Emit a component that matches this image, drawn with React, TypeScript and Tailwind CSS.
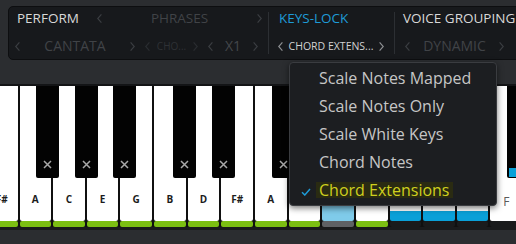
import React from 'react';

type Tone = 'bright' | 'dim' | 'faint' | 'mid';

const chevColor: Record<Tone, string> = {
  bright: 'text-[#b8b8b8]',
  mid: 'text-[#8e9093]',
  dim: 'text-[#3b3e42]',
  faint: 'text-[#2a2d31]',
};

function Chev({ dir, tone }: { dir: 'l' | 'r'; tone: Tone }) {
  return (
    <svg width="5" height="9" viewBox="0 0 5 9" className={`shrink-0 ${chevColor[tone]}`}>
      <path
        d={dir === 'l' ? 'M4.4 0.4 L0.7 4.5 L4.4 8.6' : 'M0.6 0.4 L4.3 4.5 L0.6 8.6'}
        fill="none"
        stroke="currentColor"
        strokeWidth="1.2"
      />
    </svg>
  );
}

function Selector({
  label,
  width,
  chev,
  textClass,
}: {
  label: string;
  width: string;
  chev: Tone;
  textClass: string;
}) {
  return (
    <div className={`flex items-center justify-between ${width}`}>
      <Chev dir="l" tone={chev} />
      <span className={`leading-none whitespace-nowrap ${textClass}`}>{label}</span>
      <Chev dir="r" tone={chev} />
    </div>
  );
}

type WhiteKey = {
  label: string;
  bar: 'green' | 'gray' | 'none';
  body: string;
  dimLabel?: boolean;
};

// keys under the open menu keep no visible label
const whiteKeys: WhiteKey[] = [
  { label: 'F#', bar: 'green', body: 'bg-white' },
  { label: 'A', bar: 'green', body: 'bg-white' },
  { label: 'C', bar: 'green', body: 'bg-white' },
  { label: 'E', bar: 'green', body: 'bg-white' },
  { label: 'G', bar: 'green', body: 'bg-white' },
  { label: 'B', bar: 'green', body: 'bg-white' },
  { label: 'D', bar: 'green', body: 'bg-white' },
  { label: 'F#', bar: 'green', body: 'bg-white' },
  { label: 'A', bar: 'green', body: 'bg-white' },
  { label: '', bar: 'green', body: 'bg-white' },
  { label: '', bar: 'gray', body: 'bg-[linear-gradient(to_bottom,#ffffff_0,#ffffff_100px,#7fcbea_100px)]' },
  { label: '', bar: 'green', body: 'bg-white' },
  { label: '', bar: 'none', body: 'bg-[linear-gradient(to_bottom,#ffffff_0,#ffffff_125px,#0aa0d8_125px)]' },
  { label: '', bar: 'none', body: 'bg-[linear-gradient(to_bottom,#ffffff_0,#ffffff_125px,#0aa0d8_125px)]' },
  { label: '', bar: 'none', body: 'bg-[linear-gradient(to_bottom,#ffffff_0,#ffffff_125px,#0aa0d8_125px)]' },
  { label: 'F', bar: 'none', body: 'bg-white', dimLabel: true },
];

const blackKeys: { pos: string; band?: boolean }[] = [
  { pos: 'left-[36px]' },
  { pos: 'left-[74.7px]' },
  { pos: 'left-[113.3px]' },
  { pos: 'left-[173.3px]' },
  { pos: 'left-[211.7px]' },
  { pos: 'left-[271.7px]' },
  { pos: 'left-[310.3px]' },
  { pos: 'left-[349.5px]' },
  { pos: 'left-[409.5px]' },
  { pos: 'left-[447.5px]' },
  { pos: 'left-[507px]', band: true },
];

const menuItems = ['Scale Notes Mapped', 'Scale Notes Only', 'Scale White Keys', 'Chord Notes', 'Chord Extensions'];

export default function App() {
  return (
    <div className="relative w-[516px] h-[244px] overflow-hidden bg-[#2b2d30] font-['Open_Sans',sans-serif]">
      {/* Header panel */}
      <div className="h-[84px] pt-[6px] pl-[8px]">
        <div className="flex w-[540px] h-[54px] rounded-[5px] border border-[#0d0e10] bg-[#17191c]">
          {/* PERFORM */}
          <div className="flex flex-col w-[259px]">
            <div className="flex items-center h-[23px] pl-[8px]">
              <span className="text-[13.5px] leading-none font-medium text-[#d8d8d8]">PERFORM</span>
              <div className="ml-auto mr-[6px]">
                <Selector label="PHRASES" width="w-[165px]" chev="dim" textClass="text-[13.5px] text-[#404347]" />
              </div>
            </div>
            <div className="flex items-center h-[24px] mt-[4px] pl-[6px]">
              <Selector label="CANTATA" width="w-[120px]" chev="dim" textClass="text-[14px] text-[#404347]" />
              <div className="ml-[10px]">
                <Selector label="CHO..." width="w-[53px]" chev="faint" textClass="text-[10px] text-[#2e3135]" />
              </div>
              <div className="ml-[10px]">
                <Selector label="X1" width="w-[50px]" chev="dim" textClass="text-[14px] text-[#44474b]" />
              </div>
            </div>
          </div>
          <div className="w-px my-[5px] bg-[#2c2f33]" />
          {/* KEYS-LOCK */}
          <div className="flex flex-col w-[125px]">
            <div className="flex items-center h-[23px] pl-[10px]">
              <span className="text-[13.5px] leading-none font-medium text-[#1e9bd7]">KEYS-LOCK</span>
            </div>
            <div className="flex items-center h-[24px] mt-[4px] pl-[9px]">
              <Selector label="CHORD EXTENS..." width="w-[106px]" chev="mid" textClass="text-[10.5px] text-[#d2d2d2]" />
            </div>
          </div>
          <div className="w-px my-[5px] bg-[#2c2f33]" />
          {/* VOICE GROUPING */}
          <div className="flex flex-col flex-1">
            <div className="flex items-center h-[23px] pl-[8px]">
              <span className="text-[13.5px] leading-none font-medium text-[#d8d8d8] whitespace-nowrap">VOICE GROUPING</span>
            </div>
            <div className="flex items-center h-[24px] mt-[4px] pl-[10px]">
              <Selector label="DYNAMIC" width="w-[99px]" chev="dim" textClass="text-[14px] text-[#404347]" />
            </div>
          </div>
        </div>
      </div>

      {/* Keyboard */}
      <div className="relative h-[143px] border-t-2 border-[#131416] bg-[#101010]">
        <div className="flex gap-[2px] ml-[-14.15px]">
          {whiteKeys.map((k, i) => (
            <div key={i} className="flex flex-col shrink-0 w-[31.65px]">
              <div
                className={`h-[135px] rounded-b-[2px] flex flex-col items-center justify-end ${k.body} ${
                  k.dimLabel ? 'pb-[13.5px]' : 'pb-[17.5px]'
                }`}
              >
                {k.label && (
                  <span
                    className={
                      k.dimLabel
                        ? 'text-[12px] leading-none text-[#5a5a5a]'
                        : 'text-[10px] leading-none font-bold text-[#1c1c1c]'
                    }
                  >
                    {k.label}
                  </span>
                )}
              </div>
              <div
                className={`h-[6px] rounded-[2px] ${
                  k.bar === 'green' ? 'bg-[#7cbf12]' : k.bar === 'gray' ? 'bg-[#5f6164]' : 'bg-[#1a1b1c]'
                }`}
              />
            </div>
          ))}
        </div>
        {blackKeys.map((b, i) => (
          <div
            key={i}
            className={`absolute top-0 ${b.pos} w-[23px] h-[92px] rounded-b-[2px] bg-[#030303] flex flex-col items-center justify-end`}
          >
            {b.band ? (
              <div className="w-[19px] h-[9px] mb-[1px] bg-[#0aa0d8]" />
            ) : (
              <svg width="9" height="9" viewBox="0 0 9 9" className="mb-[9px] text-[#a8a8a8]">
                <path d="M1 1 L8 8 M8 1 L1 8" stroke="currentColor" strokeWidth="1.5" />
              </svg>
            )}
          </div>
        ))}
      </div>
      <div className="h-[3px] bg-[#1a1b1c]" />

      {/* Dropdown menu */}
      <div className="absolute left-[289px] top-[62px] w-[208px] rounded-[4px] border border-[#3a3c40] bg-[#1c1e21] py-[1px] shadow-[0_2px_6px_rgba(0,0,0,0.55)]">
        {menuItems.map((item, i) => {
          const active = i === menuItems.length - 1;
          return (
            <div key={item} className={`relative flex items-center h-[28px] ${active ? 'pl-[26px]' : 'pl-[29px]'}`}>
              {active && (
                <svg width="10" height="8" viewBox="0 0 10 8" className="absolute left-[11px] top-[12px] text-[#1e9bd7]">
                  <path d="M1 4.2 L3.8 7 L9 1" fill="none" stroke="currentColor" strokeWidth="1.5" />
                </svg>
              )}
              {active ? (
                <span className="h-[16px] px-[3px] leading-[16px] text-[16px] bg-[#2a2b12] text-[#cfd01e] whitespace-nowrap">
                  {item}
                </span>
              ) : (
                <span className="text-[16px] leading-[28px] text-[#c6c6c6] whitespace-nowrap">{item}</span>
              )}
            </div>
          );
        })}
      </div>
    </div>
  );
}
